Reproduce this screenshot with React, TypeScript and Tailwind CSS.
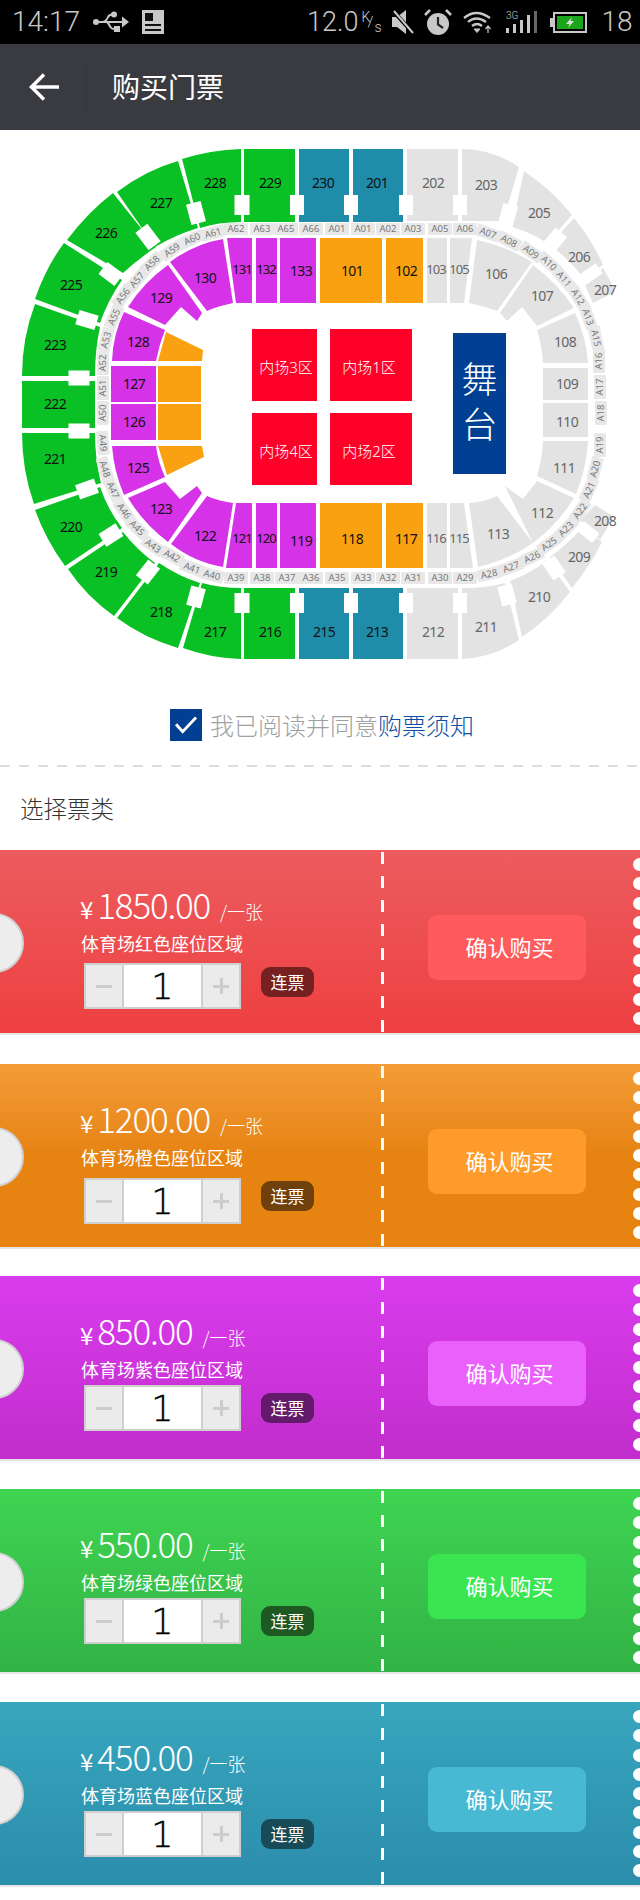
import React from 'react'

const GREEN = '#0ac125'
const TEAL = '#1f8daa'
const GRAY = '#e3e3e3'
const PURPLE = '#d633e8'
const ORANGE = '#f9a110'
const RED = '#ff0029'

// seat blocks of the arena, in page coordinates (the svg viewBox starts at y=130)
const blocks: [string, string][] = [
  // outer ring, top
  [GREEN, 'M182 159Q210 150 241 149L241 222Q218 222 200 228Z'],
  [GREEN, 'M117 192Q146 170 178 161L198 228Q175 235 155 247Z'],
  [GREEN, 'M67 240Q88 212 113 193L156 247Q137 260 123 273Z'],
  [GREEN, 'M35 299Q46 267 64 243L122 280Q108 300 100 323Z'],
  [GREEN, 'M35 304Q22 338 22 376L95 376Q95 350 100 327Z'],
  [GREEN, 'M22 381L95 381L95 428L22 428Z'],
  [GREEN, 'M22 433L95 433Q95 460 101 483L34 504Q22 470 22 433Z'],
  [GREEN, 'M35 510L100 487Q108 510 122 528L65 566Q46 540 35 510Z'],
  [GREEN, 'M68 569L123 532Q137 550 155 563L114 616Q86 596 68 569Z'],
  [GREEN, 'M117 618L159 563Q178 576 200 583L178 648Q144 638 117 618Z'],
  [GREEN, 'M183 648L202 583Q220 588 241 588L241 659Q210 658 183 648Z'],
  [GREEN, 'M244 588L295 588L295 659L244 659Z'],
  [TEAL, 'M299 588L349 588L349 659L299 659Z'],
  [TEAL, 'M353 588L403 588L403 659L353 659Z'],
  [GRAY, 'M407 588L458 588L458 659L407 659Z'],
  [GRAY, 'M462 588Q488 588 505 583L519 640Q492 658 462 659Z'],
  [GRAY, 'M510 581Q530 574 547 560L570 592Q548 620 522 637Z'],
  [GRAY, 'M550 557Q568 544 582 528L602 542Q590 566 572 588Z'],
  [GRAY, 'M595 505L613 516Q608 528 600 540L580 520Z'],
  [GRAY, 'M603 268Q610 279 615 292L593 303L585 285Z'],
  [GRAY, 'M574 218Q592 240 603 265L583 277Q568 258 550 245Z'],
  [GRAY, 'M524 171Q552 190 572 215L547 243Q530 232 512 227Z'],
  [GRAY, 'M462 149Q492 149 519 167L503 221Q484 221 462 221Z'],
  [GRAY, 'M407 149L458 149L458 221L407 221Z'],
  [TEAL, 'M353 149L403 149L403 222L353 222Z'],
  [TEAL, 'M299 149L349 149L349 222L299 222Z'],
  [GREEN, 'M244 149L295 149L295 222L244 222Z'],
  // inner ring
  [PURPLE, 'M280 238L316 238L316 303L280 303Z'],
  [PURPLE, 'M256 238L277 238L277 303L256 303Z'],
  [PURPLE, 'M227 238L252 238L252 303L236 303Z'],
  [PURPLE, 'M170 262Q194 244 223 239L233 303Q218 306 207 311Z'],
  [PURPLE, 'M128 307Q144 282 168 265L202 313L197 321L181 307L165 325Z'],
  [PURPLE, 'M112 361Q113 334 124 312L165 330Q159 345 156 361Z'],
  [PURPLE, 'M111 366L156 366L156 402L111 402Z'],
  [PURPLE, 'M111 404L156 404L156 440L111 440Z'],
  [PURPLE, 'M112 446L156 446Q158 462 165 477L124 495Q114 472 112 446Z'],
  [PURPLE, 'M128 498L165 482L180 499L197 486L202 493L168 542Q144 524 128 498Z'],
  [PURPLE, 'M207 496Q218 501 233 503L223 567Q194 562 171 544Z'],
  [PURPLE, 'M236 503L252 503L252 568L226 568Z'],
  [PURPLE, 'M256 503L277 503L277 568L256 568Z'],
  [PURPLE, 'M280 503L316 503L316 568L280 568Z'],
  [ORANGE, 'M320 238L382 238L382 303L320 303Z'],
  [ORANGE, 'M386 238L423 238L423 303L386 303Z'],
  [ORANGE, 'M320 503L382 503L382 568L320 568Z'],
  [ORANGE, 'M386 503L423 503L423 568L386 568Z'],
  [ORANGE, 'M166 332L203 350L202 361L158 361Z'],
  [ORANGE, 'M158 366L201 366L201 402L158 402Z'],
  [ORANGE, 'M158 404L201 404L201 440L158 440Z'],
  [ORANGE, 'M158 446L202 446L204 457L167 475Z'],
  [GRAY, 'M427 238L447 238L447 303L427 303Z'],
  [GRAY, 'M450 238L472 238L464 303L450 303Z'],
  [GRAY, 'M477 240Q506 246 532 262L497 311Q484 306 469 303Z'],
  [GRAY, 'M533 265Q558 284 574 308L537 326L522 307L507 321L500 313Z'],
  [GRAY, 'M537 330L575 313Q586 336 588 363L543 363Q542 346 537 330Z'],
  [GRAY, 'M543 368L588 368L588 400L543 400Z'],
  [GRAY, 'M543 403L588 403L588 437L543 437Z'],
  [GRAY, 'M543 441L588 441Q586 470 576 494L537 476Q542 460 543 441Z'],
  [GRAY, 'M537 481L574 498Q558 524 533 543L505 486L523 499Z'],
  [GRAY, 'M469 503Q484 502 497 496L533 543Q508 560 478 567Z'],
  [GRAY, 'M450 503L464 503L473 568L450 568Z'],
  [GRAY, 'M427 503L447 503L447 568L427 568Z'],
  [RED, 'M252 329L317 329L317 401L252 401Z'],
  [RED, 'M252 413L317 413L317 485L252 485Z'],
  [RED, 'M330 329L412 329L412 401L330 401Z'],
  [RED, 'M330 413L412 413L412 485L330 485Z'],
]

// white gangway boxes: x, y, w, h, rotation
const doors: number[][] = [
  [242, 205, 15, 20, 0], [297, 205, 14, 20, 0], [351, 205, 14, 20, 0], [406, 205, 14, 20, 0], [460, 205, 14, 20, 0],
  [196, 213, 15, 21, -15], [148, 237, 15, 22, -37], [111, 274, 15, 20, -53], [87, 320, 20, 15, 17], [79, 378, 21, 15, 0],
  [508, 215, 15, 21, 15], [555, 240, 15, 20, 40], [591, 274, 20, 12, -35],
  [79, 431, 21, 15, 0], [87, 489, 20, 15, -20], [111, 535, 20, 15, -32], [148, 572, 15, 20, 38], [196, 597, 15, 20, 15],
  [242, 603, 15, 20, 0], [297, 603, 14, 20, 0], [351, 603, 14, 20, 0], [406, 603, 14, 20, 0], [460, 603, 14, 20, 0],
  [507, 595, 15, 20, -15], [554, 568, 15, 20, -35], [588, 532, 20, 12, 38],
]

// number labels: text, x, y
const seatLabels: [string, number, number][] = [
  ['229', 270, 183], ['228', 215, 183], ['227', 161, 203], ['226', 106, 233], ['225', 71, 285], ['223', 55, 345],
  ['222', 55, 404], ['221', 55, 459], ['220', 71, 527], ['219', 106, 572], ['218', 161, 612], ['217', 215, 632],
  ['216', 270, 632], ['215', 324, 632], ['213', 377, 632], ['230', 323, 183], ['201', 377, 183],
  ['133', 301, 271], ['130', 205, 278], ['129', 161, 298], ['128', 138, 342],
  ['127', 134, 384], ['126', 134, 422], ['125', 138, 468], ['123', 161, 509], ['122', 205, 536],
  ['119', 301, 541], ['101', 352, 271], ['102', 406, 271], ['118', 352, 539], ['117', 406, 539],
]

const grayLabels: [string, number, number][] = [
  ['212', 433, 632], ['211', 486, 627], ['210', 539, 597], ['209', 579, 557], ['208', 605, 521], ['207', 605, 290],
  ['206', 579, 257], ['205', 539, 213], ['203', 486, 185], ['202', 433, 183],
  ['106', 496, 274], ['107', 542, 296], ['108', 565, 342], ['109', 567, 384], ['110', 567, 422], ['111', 564, 468],
  ['112', 542, 513], ['113', 498, 534],
]

// the slim blocks need tighter digits
const slimLabels: [string, number, number, string][] = [
  ['131', 242, 269, '#111'], ['132', 266, 269, '#111'], ['121', 242, 538, '#111'], ['120', 266, 538, '#111'],
  ['103', 436, 269, '#666'], ['105', 459, 269, '#666'], ['115', 459, 538, '#666'], ['116', 436, 538, '#666'],
]

// aisle tags around the inner ring: text, x, y, rotation
const aisles: [string, number, number, number][] = [
  ['A62', 236, 229, 0], ['A63', 262, 229, 0], ['A65', 286, 229, 0], ['A66', 311, 229, 0], ['A01', 337, 229, 0],
  ['A01', 363, 229, 0], ['A02', 388, 229, 0], ['A03', 413, 229, 0], ['A05', 440, 229, 0], ['A06', 465, 229, 0],
  ['A07', 488, 233, 20], ['A08', 509, 241, 28], ['A09', 531, 252, 35], ['A10', 549, 263, 42], ['A11', 564, 279, 50],
  ['A12', 578, 297, 58], ['A13', 588, 317, 70], ['A15', 596, 338, 78], ['A16', 599, 361, -90], ['A17', 600, 387, -90],
  ['A18', 601, 413, -90], ['A19', 600, 445, -90], ['A20', 595, 469, -75], ['A21', 589, 490, -65], ['A22', 580, 511, -55],
  ['A23', 566, 529, -45], ['A25', 549, 544, -35], ['A26', 532, 557, -25], ['A27', 511, 567, -20], ['A28', 489, 574, -12],
  ['A29', 465, 578, 0], ['A30', 440, 578, 0], ['A31', 413, 578, 0], ['A32', 388, 578, 0], ['A33', 363, 578, 0],
  ['A35', 337, 578, 0], ['A36', 311, 578, 0], ['A37', 287, 578, 0], ['A38', 262, 578, 0], ['A39', 236, 578, 0],
  ['A40', 212, 575, 15], ['A41', 192, 568, 20], ['A42', 172, 556, 28], ['A43', 153, 546, 35], ['A45', 137, 528, 45],
  ['A46', 124, 511, 55], ['A47', 113, 490, 65], ['A48', 105, 469, 72], ['A49', 103, 443, 85], ['A50', 103, 413, -90],
  ['A51', 103, 388, -90], ['A52', 103, 363, -90], ['A53', 106, 340, -75], ['A55', 114, 317, -65], ['A56', 123, 296, -55],
  ['A57', 137, 280, -50], ['A58', 152, 263, -45], ['A59', 172, 250, -35], ['A60', 192, 239, -25], ['A61', 213, 233, -15],
]

function SeatMap() {
  return (
    <svg viewBox="0 130 640 570" className="block h-[570px] w-[640px] font-['Noto_Sans','Noto_Sans_CJK_SC',sans-serif]">
      {blocks.map(([fill, d], i) => (
        <path key={i} d={d} fill={fill} />
      ))}
      {doors.map(([x, y, w, h, r], i) => (
        <rect key={i} x={x - w / 2} y={y - h / 2} width={w} height={h} fill="#fff" transform={`rotate(${r} ${x} ${y})`} />
      ))}
      {aisles.map(([t, x, y, r], i) => (
        <g key={i} transform={`rotate(${r} ${x} ${y})`}>
          <rect x={x - 12} y={y - 6} width={24} height={12} rx={1} fill="#e8e8e8" />
          <text x={x} y={y + 3.3} textAnchor="middle" fontSize={9.5} fill="#777">{t}</text>
        </g>
      ))}
      {seatLabels.map(([t, x, y]) => (
        <text key={t} x={x} y={y + 5} textAnchor="middle" fontSize={14} letterSpacing={-0.6} fill="#111">{t}</text>
      ))}
      {grayLabels.map(([t, x, y]) => (
        <text key={t} x={x} y={y + 5} textAnchor="middle" fontSize={14} letterSpacing={-0.6} fill="#666">{t}</text>
      ))}
      {slimLabels.map(([t, x, y, fill]) => (
        <text key={t} x={x} y={y + 5} textAnchor="middle" fontSize={13} letterSpacing={-1} fill={fill}>{t}</text>
      ))}
      {[['内场3区', 286, 368], ['内场4区', 286, 452], ['内场1区', 369, 368], ['内场2区', 369, 452]].map(([t, x, y]) => (
        <text key={t as string} x={x as number} y={(y as number) + 5} textAnchor="middle" fontSize={15} fontWeight={300} fill="#fff">{t}</text>
      ))}
      <rect x={453} y={333} width={53} height={141} fill="#003f91" />
      <text x={479.5} y={393} textAnchor="middle" fontSize={36} fontWeight={300} fill="#fff">舞</text>
      <text x={479.5} y={438} textAnchor="middle" fontSize={36} fontWeight={300} fill="#fff">台</text>
    </svg>
  )
}

function StatusBar() {
  const c = '#c8c8c8'
  return (
    <div className="flex h-[44px] items-center bg-black font-['Roboto',sans-serif] font-light text-[#c8c8c8]">
      <span className="ml-[12px] w-[70px] text-[28px] leading-none">14:17</span>
      <svg viewBox="0 0 36 22" className="ml-[11px] h-[22px] w-[36px]">
        <circle cx="3" cy="11" r="3" fill={c} />
        <path d="M3 11H30" stroke={c} strokeWidth="2" />
        <path d="M29 5.5L36 11L29 16.5Z" fill={c} />
        <path d="M9 11Q13 11 15 6Q16 3.500 20 3.500M13 11Q15 11 17 15.500Q18 18 22 18" stroke={c} strokeWidth="2" fill="none" />
        <circle cx="21" cy="3.500" r="3" fill={c} />
        <rect x="21" y="15" width="6" height="6" fill={c} />
      </svg>
      <svg viewBox="0 0 22 24" className="ml-[13px] h-[24px] w-[22px]">
        <path d="M0 0H22V24H0Z" fill={c} />
        <path d="M3 3H11V11H3ZM3 14H19V16H3ZM3 19H19V21H3Z" fill="#111" />
      </svg>
      <span className="ml-[143px] text-[27px] leading-none">12.0</span>
      <span className="relative ml-[3px] h-[26px] w-[20px] text-[14px] leading-none">
        <span className="absolute left-0 top-[1px]">K</span>
        <span className="absolute left-[6px] top-[6px] text-[15px]">/</span>
        <span className="absolute left-[13px] top-[11px]">s</span>
      </span>
      <svg viewBox="0 0 22 24" className="ml-[11px] h-[24px] w-[22px]">
        <path d="M0 7H5L14 0V24L5 17H0Z" fill={c} />
        <path d="M2 2L21 23" stroke="#000" strokeWidth="4" />
        <path d="M2 1L21 23" stroke={c} strokeWidth="2" />
      </svg>
      <svg viewBox="0 0 28 26" className="ml-[10px] h-[26px] w-[28px]">
        <circle cx="14" cy="15" r="11" fill={c} />
        <path d="M14 8V15.500L19 19" stroke="#222" strokeWidth="2.200" fill="none" />
        <path d="M1 6L6 1M22 1L27 6" stroke={c} strokeWidth="2.500" />
      </svg>
      <svg viewBox="0 0 30 22" className="ml-[11px] h-[22px] w-[30px]" fill="none" stroke={c} strokeWidth="2.300">
        <path d="M1 7Q13 -3 27 7" />
        <path d="M5 11Q13 4 23 11" />
        <path d="M9 15Q14 11 19 15" />
        <path d="M11 18L14 21.500L17 18Z" fill={c} strokeWidth="1" />
        <path d="M25 22V16M22.500 18L25 15L27.500 18" strokeWidth="1.200" />
      </svg>
      <svg viewBox="0 0 32 24" className="ml-[13px] h-[24px] w-[32px]">
        <text x="0" y="9" fontSize="10" fill={c} fontFamily="Roboto">3G</text>
        <rect x="0" y="18" width="3" height="5" fill={c} />
        <rect x="7" y="14" width="3" height="9" fill={c} />
        <rect x="14" y="10" width="3" height="13" fill={c} />
        <rect x="21" y="5" width="3" height="18" fill={c} />
        <rect x="28" y="1" width="3" height="22" fill="#666" />
      </svg>
      <svg viewBox="0 0 37 21" className="ml-[12px] h-[21px] w-[37px]">
        <rect x="0" y="6" width="3" height="9" fill={c} />
        <rect x="4" y="1" width="32" height="19" fill="none" stroke={c} strokeWidth="2" />
        <rect x="7" y="4" width="26" height="13" fill="#1aa61a" />
        <path d="M22 5L16 12H19.500L18 16L24 9H20.500Z" fill="#ddd" />
      </svg>
      <span className="ml-[14px] text-[28px] leading-none">18</span>
    </div>
  )
}

type Ticket = {
  price: string
  area: string
  bg: string
  btn: string
  tag: string
  stepGap: string
  tagGap: string
  after: string
}

const tickets: Ticket[] = [
  { price: '1850.00', area: '体育场红色座位区域', bg: 'from-[#ec5b5e] to-[#ee3f41]', btn: 'bg-[#ff5a5c]', tag: 'bg-[#762022]', stepGap: 'mt-[9px]', tagGap: 'mt-[4px]', after: 'mb-[29px]' },
  { price: '1200.00', area: '体育场橙色座位区域', bg: 'from-[#f49c36] to-[#e68311] to-50%', btn: 'bg-[#ff9b2b]', tag: 'bg-[#6f400b]', stepGap: 'mt-[10px]', tagGap: 'mt-[3px]', after: 'mb-[27px]' },
  { price: '850.00', area: '体育场紫色座位区域', bg: 'from-[#d93ced] to-[#c22dcc]', btn: 'bg-[#ea60fb]', tag: 'bg-[#621a6a]', stepGap: 'mt-[5px]', tagGap: 'mt-[8px]', after: 'mb-[28px]' },
  { price: '550.00', area: '体育场绿色座位区域', bg: 'from-[#3fd452] to-[#32b345]', btn: 'bg-[#3ae552]', tag: 'bg-[#1e5923]', stepGap: 'mt-[5px]', tagGap: 'mt-[8px]', after: 'mb-[28px]' },
  { price: '450.00', area: '体育场蓝色座位区域', bg: 'from-[#38a6bd] to-[#2b8dac]', btn: 'bg-[#47b9d2]', tag: 'bg-[#164b57]', stepGap: 'mt-[5px]', tagGap: 'mt-[8px]', after: '' },
]

function TicketCard({ t }: { t: Ticket }) {
  return (
    <div className={`border-b-2 border-[#e6e6e6] ${t.after}`}>
      <div className={`relative flex h-[183px] overflow-hidden bg-linear-to-b text-white ${t.bg}`}>
        <div className="absolute left-[-36px] top-[63px] h-[60px] w-[60px] rounded-full border-2 border-[#d0d0d0] bg-[#ededed]" />
        <div className="w-[381px] pl-[80px] pt-[33px]">
          <div className="flex h-[42px] items-baseline leading-[42px]">
            <span className="text-[24px] leading-none">¥</span>
            <span className="ml-[4px] text-[35px] font-light tracking-[-1.2px]">{t.price}</span>
            <span className="ml-[10px] text-[18px] font-light">/一张</span>
          </div>
          <div className="mt-[7px] pl-[1px] text-[18px] leading-[22px]">{t.area}</div>
          <div className={`flex items-start ${t.stepGap}`}>
            <div className="ml-[4px] flex h-[46px] w-[157px] border-2 border-[#cfcfcf] bg-white text-black">
              <div className="flex w-[36px] items-center justify-center bg-[#ebebeb]">
                <span className="h-[3px] w-[16px] bg-[#cccccc]" />
              </div>
              <div className="flex flex-1 items-center justify-center border-x-2 border-[#cfcfcf] pt-[2px] font-['DejaVu_Sans',sans-serif] text-[35px] font-extralight leading-none [-webkit-text-stroke:0.4px_black]">1</div>
              <div className="relative flex w-[36px] items-center justify-center bg-[#ebebeb]">
                <span className="h-[3px] w-[16px] bg-[#cccccc]" />
                <span className="absolute h-[16px] w-[3px] bg-[#cccccc]" />
              </div>
            </div>
            <div className={`ml-[20px] flex h-[30px] w-[53px] items-center justify-center rounded-[9px] text-[17px] ${t.tag} ${t.tagGap}`}>连票</div>
          </div>
        </div>
        <div className="flex h-full w-[3px] flex-col gap-[12px] pt-[2px]">
          {Array.from({ length: 8 }).map((_, i) => (
            <span key={i} className="h-[12px] w-[3px] shrink-0 bg-white" />
          ))}
        </div>
        <div className="flex flex-1 items-start pl-[44px] pt-[65px]">
          <div className={`flex h-[65px] w-[158px] items-center justify-center rounded-[9px] pb-[3px] pl-[5px] text-[22px] ${t.btn}`}>确认购买</div>
        </div>
        <div className="absolute right-[-6px] top-[8px] flex w-[13px] flex-col gap-[6.25px]">
          {Array.from({ length: 9 }).map((_, i) => (
            <span key={i} className="h-[13px] w-[13px] rounded-full bg-white" />
          ))}
        </div>
      </div>
    </div>
  )
}

export default function App() {
  return (
    <div className="h-[1900px] w-[640px] overflow-hidden bg-white font-['Noto_Sans_CJK_SC','Noto_Sans',sans-serif]">
      <StatusBar />
      <div className="flex h-[86px] items-center bg-[#3a3b40] text-white">
        <svg viewBox="0 0 30 28" className="ml-[29px] h-[28px] w-[30px]" fill="none" stroke="#fff" strokeWidth="3.500">
          <path d="M30 14H3M15 1.500L2.500 14L15 26.500" />
        </svg>
        <div className="ml-[27px] h-[44px] w-[1px] bg-[#33343a]" />
        <div className="mb-[2px] ml-[25px] text-[28px] font-normal leading-none">购买门票</div>
      </div>
      <SeatMap />
      <div className="mt-[9px] flex h-[32px] items-center pl-[170px]">
        <span className="flex h-[32px] w-[32px] items-center justify-center bg-[#003f91]">
          <svg viewBox="0 0 28 24" className="h-[20px] w-[26px]" fill="none" stroke="#fff" strokeWidth="3.500">
            <path d="M2 11L10 20L26 3" />
          </svg>
        </span>
        <span className="ml-[8px] text-[24px] font-light leading-none text-[#a0a0a0]">我已阅读并同意</span>
        <span className="text-[24px] font-light leading-none text-[#0b4da2]">购票须知</span>
      </div>
      <div className="mt-[24px] h-[2px] bg-[repeating-linear-gradient(90deg,#dddddd_0,#dddddd_10px,transparent_10px,transparent_19px)]" />
      <div className="flex h-[83px] items-center pl-[20px] text-[23.500px] font-light text-[#333333]">选择票类</div>
      {tickets.map((t) => (
        <TicketCard key={t.price} t={t} />
      ))}
    </div>
  )
}
